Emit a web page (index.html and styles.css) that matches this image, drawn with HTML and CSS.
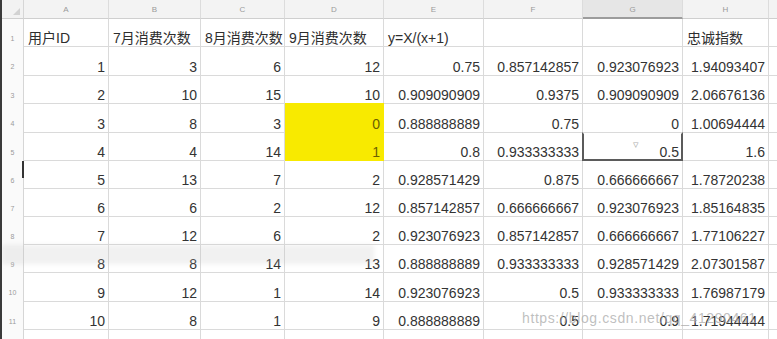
FILE: index.html
```html
<!DOCTYPE html>
<html lang="zh">
<head>
<meta charset="utf-8">
<title>Sheet</title>
<link rel="stylesheet" href="styles.css">
</head>
<body>
<div class="sheet">
  <div class="corner"></div>
  <div class="ch">A</div><div class="ch">B</div><div class="ch">C</div><div class="ch">D</div><div class="ch">E</div><div class="ch">F</div><div class="ch sel">G</div><div class="ch">H</div><div class="ch"></div>

  <div class="rh">1</div><div class="c t">用户ID</div><div class="c t">7月消费次数</div><div class="c t">8月消费次数</div><div class="c t">9月消费次数</div><div class="c t">y=X/(x+1)</div><div class="c"></div><div class="c"></div><div class="c t">忠诚指数</div><div class="c"></div>

  <div class="rh">2</div><div class="c">1</div><div class="c">3</div><div class="c">6</div><div class="c">12</div><div class="c">0.75</div><div class="c">0.857142857</div><div class="c">0.923076923</div><div class="c">1.94093407</div><div class="c"></div>

  <div class="rh">3</div><div class="c">2</div><div class="c">10</div><div class="c">15</div><div class="c">10</div><div class="c">0.909090909</div><div class="c">0.9375</div><div class="c">0.909090909</div><div class="c">2.06676136</div><div class="c"></div>

  <div class="rh">4</div><div class="c">3</div><div class="c">8</div><div class="c">3</div><div class="c yel yel-top">0</div><div class="c">0.888888889</div><div class="c">0.75</div><div class="c">0</div><div class="c">1.00694444</div><div class="c"></div>

  <div class="rh">5</div><div class="c">4</div><div class="c">4</div><div class="c">14</div><div class="c yel">1</div><div class="c">0.8</div><div class="c">0.933333333</div><div class="c active"><span class="cursor">▿</span>0.5</div><div class="c">1.6</div><div class="c"></div>

  <div class="rh mark">6</div><div class="c">5</div><div class="c">13</div><div class="c">7</div><div class="c">2</div><div class="c">0.928571429</div><div class="c">0.875</div><div class="c">0.666666667</div><div class="c">1.78720238</div><div class="c"></div>

  <div class="rh">7</div><div class="c">6</div><div class="c">6</div><div class="c">2</div><div class="c">12</div><div class="c">0.857142857</div><div class="c">0.666666667</div><div class="c">0.923076923</div><div class="c">1.85164835</div><div class="c"></div>

  <div class="rh">8</div><div class="c">7</div><div class="c">12</div><div class="c">6</div><div class="c">2</div><div class="c">0.923076923</div><div class="c">0.857142857</div><div class="c">0.666666667</div><div class="c">1.77106227</div><div class="c"></div>

  <div class="rh">9</div><div class="c">8</div><div class="c">8</div><div class="c">14</div><div class="c">13</div><div class="c">0.888888889</div><div class="c">0.933333333</div><div class="c">0.928571429</div><div class="c">2.07301587</div><div class="c"></div>

  <div class="rh">10</div><div class="c">9</div><div class="c">12</div><div class="c">1</div><div class="c">14</div><div class="c">0.923076923</div><div class="c">0.5</div><div class="c">0.933333333</div><div class="c">1.76987179</div><div class="c"></div>

  <div class="rh">11</div><div class="c">10</div><div class="c">8</div><div class="c">1</div><div class="c">9</div><div class="c">0.888888889</div><div class="c">0.5</div><div class="c">0.9</div><div class="c">1.71944444</div><div class="c"></div>

  <div class="rh">12</div><div class="c"></div><div class="c"></div><div class="c"></div><div class="c"></div><div class="c"></div><div class="c"></div><div class="c"></div><div class="c"></div><div class="c"></div>

  <div class="band"></div>
  <div class="wm">https://blog.csdn.net/qq_41290461</div>
</div>
</body>
</html>
```

FILE: styles.css
```css
html, body {
  margin: 0;
  padding: 0;
  background: #ffffff;
  overflow: hidden;
}
.sheet {
  position: relative;
  width: 777px;
  height: 339px;
  overflow: hidden;
  display: grid;
  grid-template-columns: 22px 85px 92px 84px 99px 100px 99px 100px 86px 10px;
  grid-template-rows: 19px 28px 29px 28px 29px 28px 28px 28px 28px 28px 29px 28px 20px;
  font-family: "Liberation Sans", "Noto Sans CJK SC", sans-serif;
  font-size: 14px;
  color: #333333;
  border-left: 2px solid #3a3a3a;
  box-sizing: border-box;
}
.corner {
  background: #f2f2f2;
  border-right: 1px solid #d6d6d6;
  border-bottom: 1px solid #cfcfcf;
  box-sizing: border-box;
  position: relative;
}
.corner::after {
  content: "";
  position: absolute;
  right: 3px;
  bottom: 3px;
  width: 0;
  height: 0;
  border-left: 7px solid transparent;
  border-bottom: 7px solid #d2d2d2;
}
.ch {
  background: #f3f3f3;
  border-right: 1px solid #dcdcdc;
  border-bottom: 1px solid #cfcfcf;
  box-sizing: border-box;
  color: #9a9a9a;
  font-size: 8px;
  display: flex;
  align-items: center;
  justify-content: center;
  padding-top: 1px;
}
.ch.sel {
  background: #e6e6e6;
  border-bottom: 2px solid #9c9c9c;
}
.rh {
  background: #fafafa;
  border-right: 1px solid #d6d6d6;
  box-sizing: border-box;
  color: #9a9a9a;
  font-size: 7px;
  display: flex;
  align-items: center;
  justify-content: center;
  padding-top: 10px;
  position: relative;
}
.rh.mark::after {
  content: "";
  position: absolute;
  right: -1px;
  top: 0;
  width: 2px;
  height: 17px;
  background: #333333;
}
.c {
  border-right: 1px solid #dadada;
  border-bottom: 1px solid #dadada;
  box-sizing: border-box;
  display: flex;
  align-items: flex-end;
  justify-content: flex-end;
  padding: 0 3px 0 4px;
  line-height: 16px;
  white-space: nowrap;
  overflow: visible;
  position: relative;
}
.c.t {
  justify-content: flex-start;
  color: #2e2e2e;
}
.yel {
  background: #f8ea00;
  border-right-color: #f8ea00;
  border-bottom-color: #f8ea00;
  color: #6a6000;
}
.yel-top {
  border-top: 1px solid #f8ea00;
  margin-top: -1px;
}
.active::after {
  content: "";
  position: absolute;
  left: -1px;
  top: -1px;
  right: -1px;
  bottom: -1px;
  border: 2px solid #5b5b5b;
  border-top-color: transparent;
  pointer-events: none;
}
.cursor {
  position: absolute;
  left: 50px;
  top: 3px;
  font-size: 11px;
  color: #b0b0b0;
}
.band {
  position: absolute;
  left: 0;
  top: 245px;
  width: 372px;
  height: 19px;
  background: rgba(190, 190, 190, 0.22);
  filter: blur(2px);
}
.wm {
  position: absolute;
  left: 520px;
  top: 310px;
  font-size: 14px;
  color: rgba(170, 170, 170, 0.75);
  letter-spacing: 0.6px;
  white-space: nowrap;
}
```
